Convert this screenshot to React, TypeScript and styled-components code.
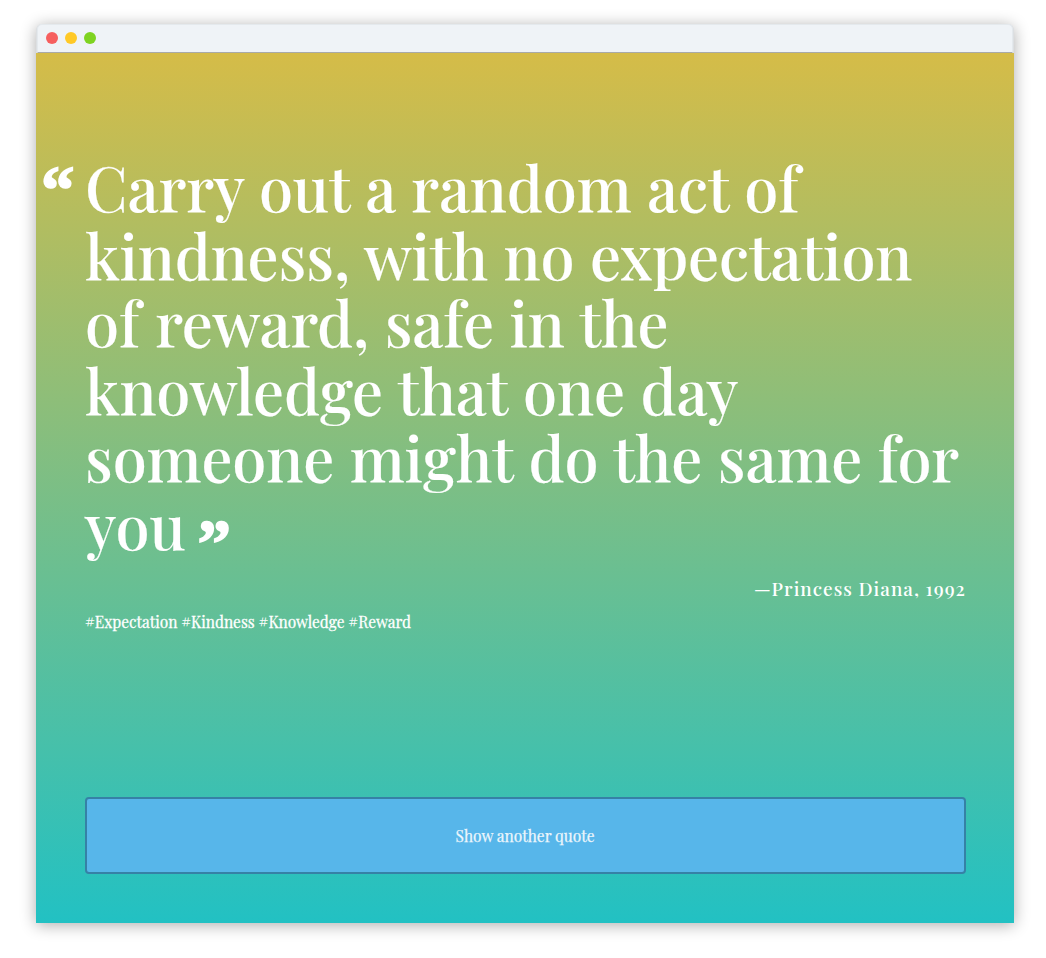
import React from 'react';
import styled, { createGlobalStyle } from 'styled-components';

const GlobalStyle = createGlobalStyle`
  * { box-sizing: border-box; }
  body { margin: 0; background: #fff; }
`;

const Page = styled.div`
  height: 958px;
  padding: 24px 32px 35px 36px;
  font-family: 'Playfair Display', 'Liberation Serif', serif;
  color: #fff;
`;

const BrowserWindow = styled.div`
  display: flex;
  flex-direction: column;
  height: 899px;
  border-radius: 6px 6px 0 0;
  background: #dcdfe2;
  box-shadow: 0 2px 16px rgba(0, 0, 0, 0.33);
`;

const TitleBar = styled.div`
  display: flex;
  align-items: center;
  gap: 7px;
  height: 29px;
  margin: 0 1px;
  padding: 0 8px 1px;
  background: #eff3f7;
  border-radius: 5px 5px 0 0;
  border: 1px solid #e4e9ed;
  border-bottom-color: #a9aaa8;
`;

const Dot = styled.span<{ $color: string }>`
  width: 12px;
  height: 12px;
  border-radius: 50%;
  background: ${(p) => p.$color};
`;

const Content = styled.main`
  flex: 1;
  display: flex;
  flex-direction: column;
  padding: 100px 48px 49px 49px;
  background: linear-gradient(to top, #22c1c3, #d5bc48);
`;

const Quote = styled.blockquote`
  margin: 0;
  font-size: 61.45px;
  font-weight: 500;
  line-height: 67.6px;
  letter-spacing: -0.1px;
  word-spacing: 0.7px;
  white-space: nowrap;
  -webkit-text-stroke: 0.15px #fff;
`;

const Mark = styled.span<{ $opening?: boolean }>`
  display: inline-block;
  width: 44px;
  margin-left: ${(p) => (p.$opening ? '-44px' : '12px')};
  font-family: 'Liberation Serif', serif;
  font-size: 67px;
  font-weight: bold;
  line-height: 0;
  vertical-align: ${(p) => (p.$opening ? '-0.5px' : '-16px')};
  -webkit-text-stroke: 1.6px #fff;
`;

const Author = styled.p`
  margin: 16px 0 0;
  text-align: right;
  font-size: 19px;
  font-weight: 500;
  line-height: 27px;
  letter-spacing: 1px;
`;

const Tags = styled.p`
  margin: 8px 0 0;
  font-size: 16.5px;
  line-height: 22px;
  transform: scaleX(0.936);
  transform-origin: left;
  -webkit-text-stroke: 0.3px #fff;
`;

const QuoteButton = styled.button`
  height: 77px;
  margin-top: auto;
  padding: 0 0 1px;
  border: 2px solid #3681a6;
  border-radius: 4px;
  background: #57b6ea;
  color: #eef6fc;
  font-family: inherit;
  font-size: 16.5px;
  -webkit-text-stroke: 0.25px #eef6fc;
`;

const ButtonLabel = styled.span`
  display: inline-block;
  transform: scaleX(0.938);
`;

export default function App() {
  return (
    <>
      <GlobalStyle />
      <Page>
        <BrowserWindow>
          <TitleBar>
            <Dot $color="#f65f5f" />
            <Dot $color="#ffc927" />
            <Dot $color="#7ed321" />
          </TitleBar>
          <Content>
            <Quote>
              <Mark $opening>“</Mark>Carry out a random act of
              <br />
              kindness, with no expectation
              <br />
              of reward, safe in the
              <br />
              knowledge that one day
              <br />
              someone might do the same for
              <br />
              you<Mark>”</Mark>
            </Quote>
            <Author>—Princess Diana, 1992</Author>
            <Tags>#Expectation #Kindness #Knowledge #Reward</Tags>
            <QuoteButton type="button">
              <ButtonLabel>Show another quote</ButtonLabel>
            </QuoteButton>
          </Content>
        </BrowserWindow>
      </Page>
    </>
  );
}
